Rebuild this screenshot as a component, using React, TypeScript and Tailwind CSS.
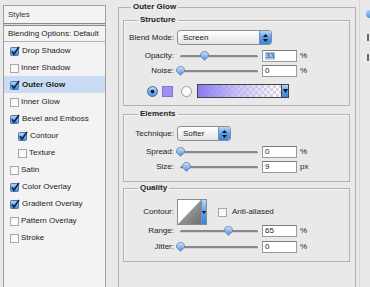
import React from "react";

const Cb = ({ on }: { on: boolean }) =>
  on ? (
    <svg width="10" height="10" viewBox="0 0 10 10" className="shrink-0">
      <defs>
        <linearGradient id="cbg" x1="0" y1="0" x2="0" y2="1">
          <stop offset="0" stopColor="#b4d6f7" />
          <stop offset="1" stopColor="#3f8ee0" />
        </linearGradient>
      </defs>
      <rect x="0.5" y="1.5" width="8" height="8" rx="1" fill="url(#cbg)" stroke="#4a78b0" />
      <path d="M2 5.3 L4 8 L9 1" stroke="#132648" strokeWidth="1.7" fill="none" />
    </svg>
  ) : (
    <span className="shrink-0 w-[9px] h-[9px] mt-[1px] border border-[#a8a8a8] bg-white shadow-inner" />
  );

const Thumb = () => (
  <svg width="9" height="10" viewBox="0 0 9 10">
    <defs>
      <linearGradient id="thg" x1="0" y1="0" x2="0" y2="1">
        <stop offset="0" stopColor="#cfe4fa" />
        <stop offset="1" stopColor="#4c92dc" />
      </linearGradient>
    </defs>
    <path d="M4.5 0.5 C7 0.5 8.5 2 8.5 4.2 L8.5 5.5 L4.5 9.3 L0.5 5.5 L0.5 4.2 C0.5 2 2 0.5 4.5 0.5 Z" fill="url(#thg)" stroke="#5b7fa8" strokeWidth="0.8" />
  </svg>
);

const Slider = ({ pct }: { pct: number }) => (
  <div className="relative w-[78px] h-[12px] flex items-center">
    <div className="w-full h-[3px] rounded-full bg-[#888] border-b border-[#d4d4d4]" />
    <div className="absolute top-[1px]" style={{ left: `${Math.round((pct / 100) * 74) - 4}px` }}>
      <Thumb />
    </div>
  </div>
);

const Input = ({ v, sel }: { v: string; sel?: boolean }) => (
  <div className="w-[35px] h-[12px] bg-white border border-[#9a9a9a] border-t-[#7a7a7a] flex items-center pl-[2px] leading-none">
    {sel ? <span className="bg-[#b3cdf0] text-[#1d3f8a] px-[0.5px]">{v}</span> : <span>{v}</span>}
  </div>
);

const Stepper = () => (
  <span className="w-[12px] h-full bg-linear-to-b from-[#b5d8fa] via-[#5aa0ea] to-[#3a86d8] rounded-r-[2px] border-l border-[#6d8fb8] flex flex-col items-center justify-center gap-[2px]">
    <svg width="5" height="3" viewBox="0 0 5 3"><path d="M0 3 L2.5 0 L5 3 Z" fill="#111" /></svg>
    <svg width="5" height="3" viewBox="0 0 5 3"><path d="M0 0 L2.5 3 L5 0 Z" fill="#111" /></svg>
  </span>
);

const Select = ({ w, text }: { w: string; text: string }) => (
  <div className={`h-[15px] ${w} rounded-[3px] border border-[#8e8e8e] bg-linear-to-b from-white to-[#e4e4e4] flex items-center overflow-hidden`}>
    <span className="flex-1 pl-[5px]">{text}</span>
    <Stepper />
  </div>
);

const Label = ({ t }: { t: string }) => (
  <span className="w-[50px] shrink-0 text-right">{t}</span>
);

const SliderRow = ({ label, pct, v, unit, sel, cls }: { label: string; pct: number; v: string; unit: string; sel?: boolean; cls: string }) => (
  <div className={`flex items-center h-[12px] ${cls}`}>
    <Label t={label} />
    <div className="ml-[6px]"><Slider pct={pct} /></div>
    <div className="ml-[4px]"><Input v={v} sel={sel} /></div>
    <span className="ml-[3px]">{unit}</span>
  </div>
);

const Group = ({ title, children, cls }: { title: string; children: React.ReactNode; cls: string }) => (
  <fieldset className={`w-[227px] border border-[#b3b3b3] shadow-[inset_1px_1px_0_#f7f7f7] ${cls}`}>
    <legend className="ml-[14px] px-[2px] font-bold leading-[10px]">{title}</legend>
    {children}
  </fieldset>
);

const Radio = ({ on }: { on: boolean }) =>
  on ? (
    <svg width="11" height="11" viewBox="0 0 11 11">
      <defs>
        <radialGradient id="rg" cx="0.5" cy="0.3" r="0.7">
          <stop offset="0" stopColor="#d4e8fb" />
          <stop offset="1" stopColor="#3d87d8" />
        </radialGradient>
      </defs>
      <circle cx="5.5" cy="5.5" r="5" fill="url(#rg)" stroke="#4c75a8" />
      <circle cx="5.5" cy="5.5" r="2" fill="#0e1a33" />
    </svg>
  ) : (
    <svg width="11" height="11" viewBox="0 0 11 11">
      <circle cx="5.5" cy="5.5" r="5" fill="#fbfbfb" stroke="#9a9a9a" />
    </svg>
  );

const items: { t: string; on: boolean; ind?: boolean; sel?: boolean }[] = [
  { t: "Drop Shadow", on: true },
  { t: "Inner Shadow", on: false },
  { t: "Outer Glow", on: true, sel: true },
  { t: "Inner Glow", on: false },
  { t: "Bevel and Emboss", on: true },
  { t: "Contour", on: true, ind: true },
  { t: "Texture", on: false, ind: true },
  { t: "Satin", on: false },
  { t: "Color Overlay", on: true },
  { t: "Gradient Overlay", on: true },
  { t: "Pattern Overlay", on: false },
  { t: "Stroke", on: false },
];

export default function App() {
  return (
    <div className="w-[370px] h-[287px] overflow-hidden bg-[#e9e9e9] flex font-['Liberation_Sans',Arial,sans-serif] text-[8px] leading-none text-[#1c1c1c]">
      {/* Left styles list */}
      <div className="ml-[3px] mt-[5px] w-[103px] h-[300px] shrink-0 border border-[#a0a0a0] bg-[#f3f3f3] flex flex-col">
        <div className="h-[17px] flex items-center pl-[4px] text-[#333]">Styles</div>
        <div className="h-[3px] border-y border-[#8a8a8a] bg-[#dcdcdc]" />
        <div className="h-[16px] flex items-center pl-[4px] border-b border-[#b5b5b5]">Blending Options: Default</div>
        {items.map((it) => (
          <div
            key={it.t}
            className={`h-[17px] flex items-center gap-[2px] ${it.ind ? "pl-[14px]" : "pl-[6px]"} ${it.sel ? "bg-[#cadcf3] font-bold" : ""}`}
          >
            <Cb on={it.on} />
            <span>{it.t}</span>
          </div>
        ))}
      </div>

      {/* Outer glow panel */}
      <fieldset className="ml-[12px] mt-[2px] w-[238px] h-[310px] shrink-0 border border-[#b3b3b3]">
        <legend className="ml-[12px] px-[2px] font-bold leading-[10px]">Outer Glow</legend>
        <div className="pl-[4px] flex flex-col">
          <Group title="Structure" cls="mt-[3px] pb-[7px]">
            <div className="flex items-center h-[15px] mt-[5px]">
              <Label t="Blend Mode:" />
              <div className="ml-[3px]"><Select w="w-[95px]" text="Screen" /></div>
            </div>
            <SliderRow label="Opacity:" pct={33} v="33" unit="%" sel cls="mt-[5px]" />
            <SliderRow label="Noise:" pct={0} v="0" unit="%" cls="mt-[3px]" />
            <div className="flex items-center h-[14px] mt-[7px] pl-[23px]">
              <Radio on />
              <span className="ml-[4px] w-[11px] h-[11px] bg-[#9d92f2] border border-[#8078d0]" />
              <span className="ml-[8px]"><Radio on={false} /></span>
              <div className="ml-[5px] w-[92px] h-[14px] border border-[#444] flex overflow-hidden">
                <div className="flex-1 bg-[repeating-conic-gradient(#d9d9d9_0%_25%,#ffffff_0%_50%)] bg-[length:6px_6px]">
                  <div className="w-full h-full bg-linear-to-r from-[#8a7bf0] via-[#b7adf6]/70 to-transparent" />
                </div>
                <span className="w-[7px] h-full bg-linear-to-b from-[#b5d8fa] via-[#5aa0ea] to-[#3a86d8] border-l border-[#444] flex items-center justify-center">
                  <svg width="5" height="4" viewBox="0 0 5 4"><path d="M0 0 L2.5 4 L5 0 Z" fill="#111" /></svg>
                </span>
              </div>
            </div>
          </Group>

          <Group title="Elements" cls="mt-[3px] pb-[8px]">
            <div className="flex items-center h-[15px] mt-[7px]">
              <Label t="Technique:" />
              <div className="ml-[3px]"><Select w="w-[54px]" text="Softer" /></div>
            </div>
            <SliderRow label="Spread:" pct={0} v="0" unit="%" cls="mt-[5px]" />
            <SliderRow label="Size:" pct={8} v="9" unit="px" cls="mt-[3px]" />
          </Group>

          <Group title="Quality" cls="mt-[1px] pb-[8px]">
            <div className="flex items-center h-[26px] mt-[6px]">
              <Label t="Contour:" />
              <div className="ml-[3px] w-[30px] h-[26px] border border-[#8a8a8a] flex overflow-hidden">
                <svg width="23" height="24" viewBox="0 0 23 24" className="shrink-0">
                  <defs>
                    <linearGradient id="ctg" x1="0" y1="0" x2="1" y2="1">
                      <stop offset="0" stopColor="#b9b9b9" />
                      <stop offset="1" stopColor="#6e6e6e" />
                    </linearGradient>
                  </defs>
                  <rect width="23" height="24" fill="#fff" />
                  <path d="M0 24 L23 0 L23 24 Z" fill="url(#ctg)" />
                </svg>
                <span className="w-[6px] h-full bg-linear-to-b from-[#b5d8fa] via-[#5aa0ea] to-[#3a86d8] border-l border-[#6d8fb8] flex items-center justify-center">
                  <svg width="4" height="3" viewBox="0 0 4 3"><path d="M0 0 L2 3 L4 0 Z" fill="#111" /></svg>
                </span>
              </div>
              <span className="ml-[11px] w-[9px] h-[9px] border border-[#a8a8a8] bg-white shadow-inner" />
              <span className="ml-[5px]">Anti-aliased</span>
            </div>
            <SliderRow label="Range:" pct={65} v="65" unit="%" cls="mt-[0px]" />
            <SliderRow label="Jitter:" pct={0} v="0" unit="%" cls="mt-[4px]" />
          </Group>
        </div>
      </fieldset>

      {/* Right edge: clipped dialog buttons */}
      <div className="ml-[3px] w-[1px] h-full bg-[#d9d9d9] shrink-0" />
      <div className="ml-[6px] flex flex-col shrink-0">
        <div className="mt-[10px] w-[30px] h-[8px] rounded-l-full bg-linear-to-b from-[#a9d0f7] to-[#4b95e2]" />
        <div className="mt-[15px] w-[30px] h-[8px] flex items-center pl-[1px]">
          <span className="w-[2px] h-[7px] bg-[#666]" />
        </div>
        <div className="mt-[12px] w-[30px] h-[8px] flex items-center pl-[1px]">
          <span className="w-[2px] h-[7px] bg-[#666]" />
        </div>
      </div>
    </div>
  );
}
